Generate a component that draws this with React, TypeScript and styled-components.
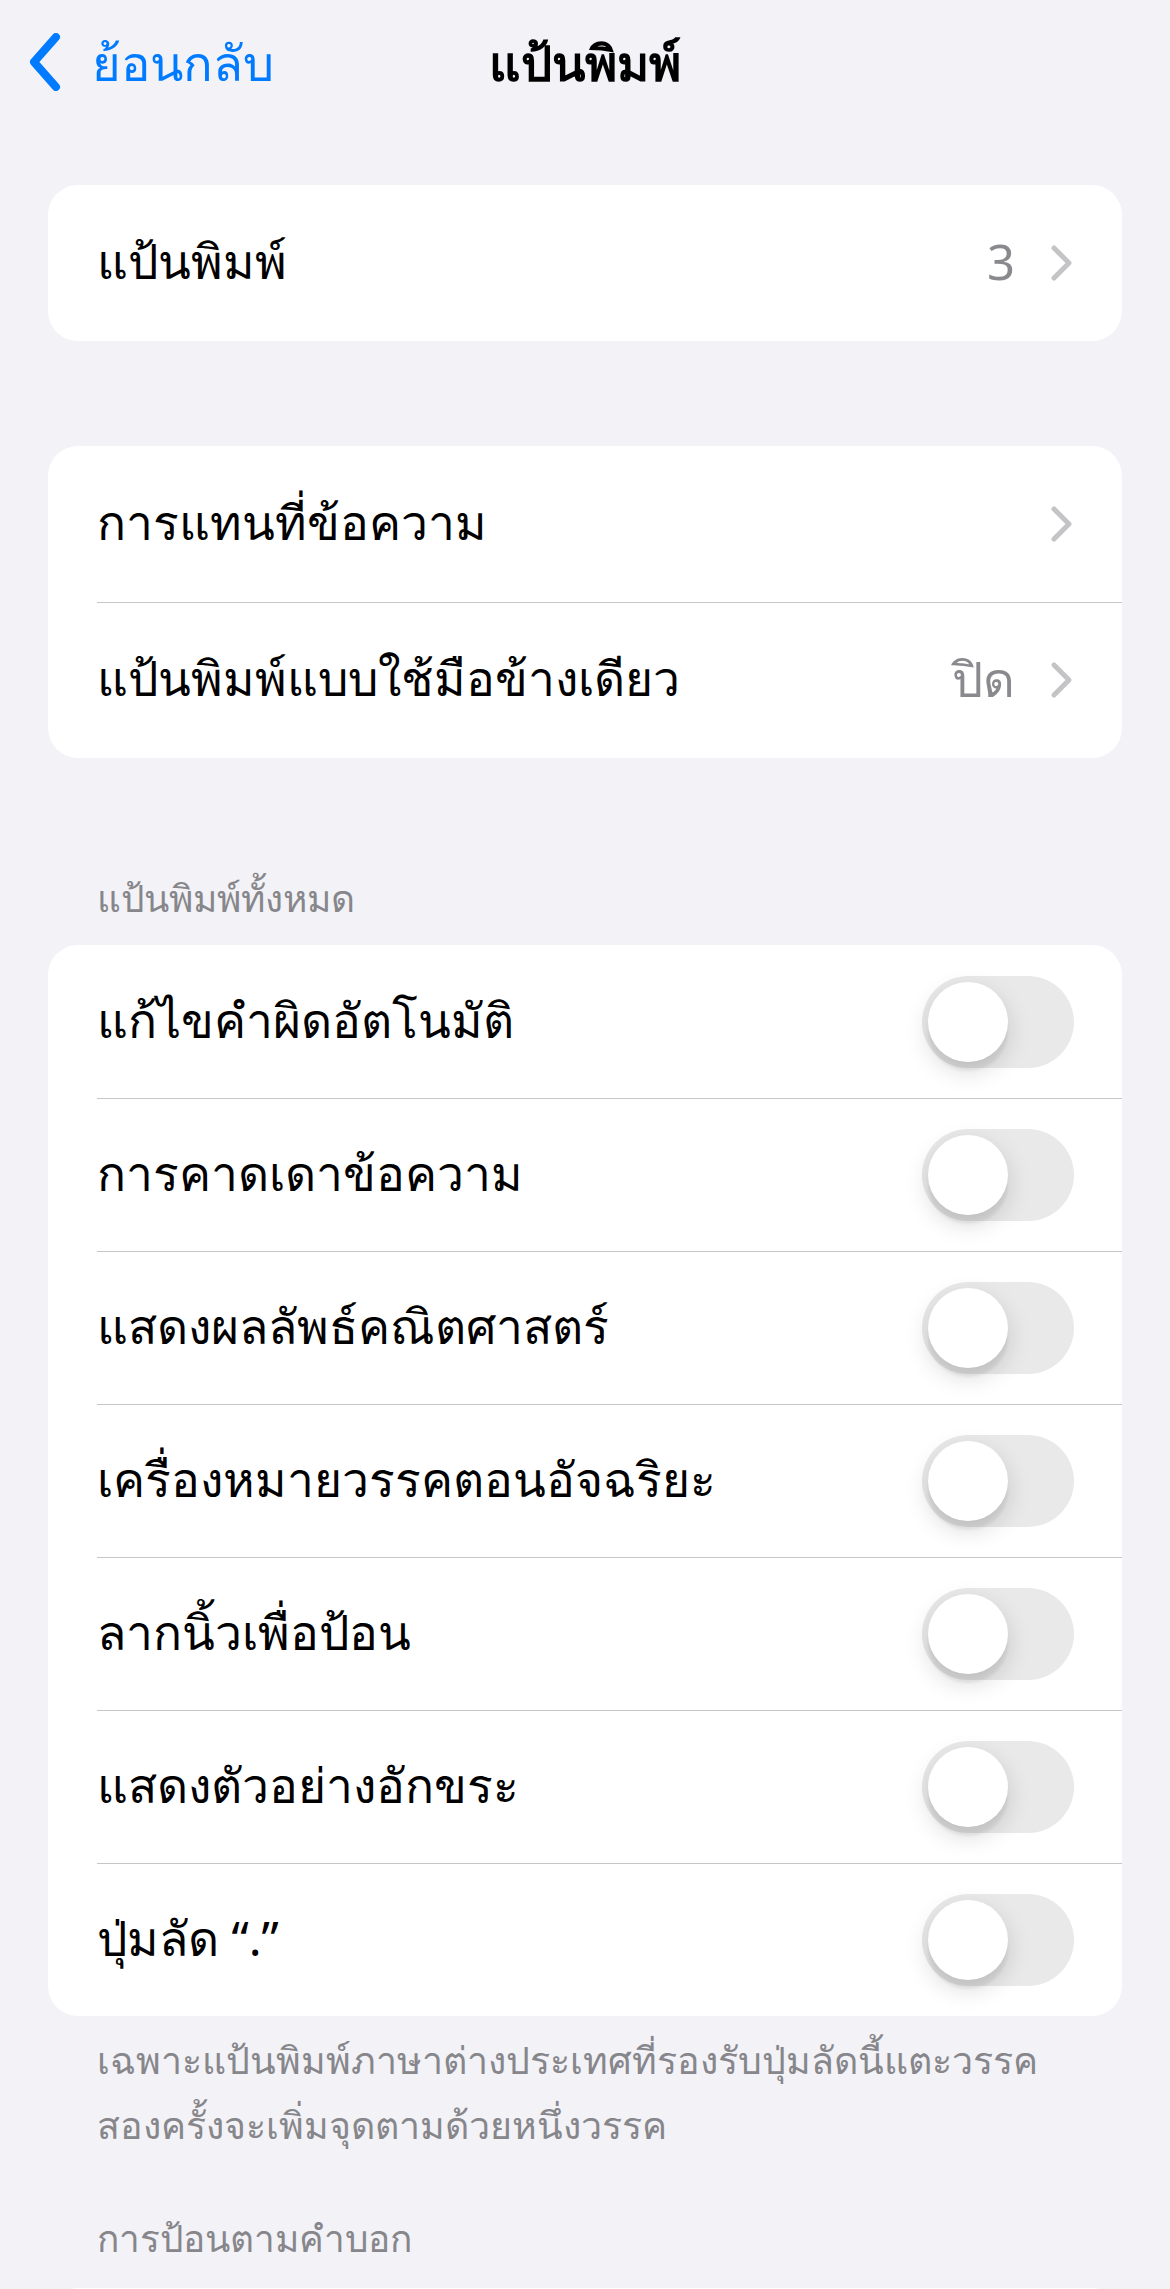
import React from "react";
import styled, { createGlobalStyle } from "styled-components";

const Global = createGlobalStyle`
  html, body { margin: 0; padding: 0; background: #f2f2f7; }
  body { font-family: "Noto Sans", "Inter", sans-serif; -webkit-font-smoothing: antialiased; }
`;

const Page = styled.div`
  width: 1170px;
  height: 2289px;
  background: #f2f2f7;
  box-sizing: border-box;
  padding: 0 48px;
  overflow: hidden;
`;

const NavBar = styled.div`
  height: 132px;
  box-sizing: border-box;
  padding: 0 28px 8px;
  display: grid;
  grid-template-columns: 1fr auto 1fr;
  align-items: center;
  margin: 0 -48px;
`;

const BackButton = styled.div`
  display: flex;
  align-items: center;
  gap: 30px;
  color: #007aff;
  font-size: 49px;
  line-height: 1;
`;

const Title = styled.div`
  font-size: 49px;
  font-weight: 700;
  color: #000;
  line-height: 1;
`;

const Card = styled.div<{ $top: number }>`
  margin-top: ${(p) => p.$top}px;
  background: #fff;
  border-radius: 30px;
  overflow: hidden;
`;

const Row = styled.div<{ $h: number }>`
  height: ${(p) => p.$h}px;
  display: flex;
  align-items: center;
  padding-left: 49px;
  position: relative;
  & + &::before {
    content: "";
    position: absolute;
    top: 0;
    left: 49px;
    right: 0;
    height: 1px;
    background: #c6c6c8;
  }
`;

const RowContent = styled.div`
  flex: 1;
  display: flex;
  align-items: center;
  padding-right: 48px;
  padding-bottom: 4px;
`;

const Label = styled.span`
  flex: 1;
  font-size: 48px;
  color: #000;
  line-height: 1;
  white-space: nowrap;
`;

const Value = styled.span`
  font-size: 49px;
  color: #8a8a8e;
  line-height: 1;
  margin-right: 35px;
`;

const Header = styled.div<{ $top: number }>`
  margin-top: ${(p) => p.$top}px;
  padding-left: 49px;
  font-size: 37px;
  line-height: 1;
  color: #86868b;
`;

const Footer = styled.div`
  margin-top: 11px;
  padding-left: 49px;
  font-size: 37.5px;
  line-height: 65px;
  color: #86868b;
  white-space: nowrap;
`;

const Track = styled.div`
  width: 152px;
  height: 92px;
  border-radius: 46px;
  background: #e9e9ea;
  position: relative;
  flex: none;
  margin-top: 4px;
`;

const Thumb = styled.div`
  position: absolute;
  left: 6px;
  top: 6px;
  width: 80px;
  height: 80px;
  border-radius: 50%;
  background: #fff;
  box-shadow: 0 9px 24px rgba(0, 0, 0, 0.15), 0 9px 3px rgba(0, 0, 0, 0.06);
`;

const Toggle = () => (
  <Track>
    <Thumb />
  </Track>
);

const ChevronIcon = styled.svg`
  flex: none;
  margin-top: 4px;
`;

const Chevron = () => (
  <ChevronIcon width="24" height="38" viewBox="0 0 24 38" fill="none">
    <path d="M4 4 L19 19 L4 34" stroke="#c4c4c7" strokeWidth="5" strokeLinecap="round" strokeLinejoin="round" />
  </ChevronIcon>
);

const BackChevron = () => (
  <svg width="34" height="58" viewBox="0 0 34 58" fill="none">
    <path d="M28 4 L6 29 L28 54" stroke="#007aff" strokeWidth="8" strokeLinecap="round" strokeLinejoin="round" />
  </svg>
);

const toggles = [
  "แก้ไขคำผิดอัตโนมัติ",
  "การคาดเดาข้อความ",
  "แสดงผลลัพธ์คณิตศาสตร์",
  "เครื่องหมายวรรคตอนอัจฉริยะ",
  "ลากนิ้วเพื่อป้อน",
  "แสดงตัวอย่างอักขระ",
  "ปุ่มลัด “.”",
];

export default function App() {
  return (
    <>
      <Global />
      <Page>
        <NavBar>
          <BackButton>
            <BackChevron />
            <span>ย้อนกลับ</span>
          </BackButton>
          <Title>แป้นพิมพ์</Title>
          <div />
        </NavBar>

        <Card $top={53}>
          <Row $h={156}>
            <RowContent>
              <Label>แป้นพิมพ์</Label>
              <Value>3</Value>
              <Chevron />
            </RowContent>
          </Row>
        </Card>

        <Card $top={105}>
          <Row $h={156}>
            <RowContent>
              <Label>การแทนที่ข้อความ</Label>
              <Chevron />
            </RowContent>
          </Row>
          <Row $h={156}>
            <RowContent>
              <Label>แป้นพิมพ์แบบใช้มือข้างเดียว</Label>
              <Value>ปิด</Value>
              <Chevron />
            </RowContent>
          </Row>
        </Card>

        <Header $top={121}>แป้นพิมพ์ทั้งหมด</Header>
        <Card $top={29}>
          {toggles.map((t) => (
            <Row $h={153} key={t}>
              <RowContent>
                <Label>{t}</Label>
                <Toggle />
              </RowContent>
            </Row>
          ))}
        </Card>
        <Footer>
          เฉพาะแป้นพิมพ์ภาษาต่างประเทศที่รองรับปุ่มลัดนี้แตะวรรค
          <br />
          สองครั้งจะเพิ่มจุดตามด้วยหนึ่งวรรค
        </Footer>

        <Header $top={62}>การป้อนตามคำบอก</Header>
        <Card $top={32}>
          <Row $h={156} />
        </Card>
      </Page>
    </>
  );
}
